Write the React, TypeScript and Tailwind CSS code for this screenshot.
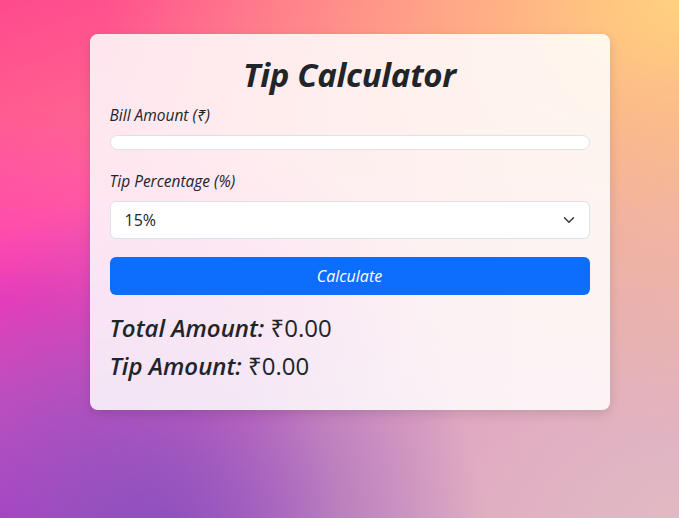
import React, { useState } from "react";

export default function App() {
  const [bill, setBill] = useState("");
  const [tip, setTip] = useState("15");
  const [total, setTotal] = useState(0);
  const [tipAmt, setTipAmt] = useState(0);

  const calc = () => {
    const b = parseFloat(bill) || 0;
    const t = (b * parseFloat(tip)) / 100;
    setTipAmt(t);
    setTotal(b + t);
  };

  return (
    <div
      className="w-full h-[518px] overflow-hidden flex justify-center pl-5 pt-[34px] text-[#212529] bg-[radial-gradient(ellipse_at_22%_105%,#8a4fbd_0%,rgba(138,79,189,0)_45%),radial-gradient(ellipse_at_0%_100%,#c83cc8_0%,rgba(200,60,200,0)_35%),radial-gradient(ellipse_at_0%_58%,#ff38b8_0%,rgba(255,56,184,0)_45%),radial-gradient(ellipse_at_100%_0%,#ffd27e_0%,rgba(255,210,126,0)_60%),radial-gradient(ellipse_at_100%_100%,#e2b9c3_0%,rgba(226,185,195,0)_55%),linear-gradient(160deg,#ff4a8c_0%,#ff6f95_30%,#e58cc0_60%,#d8a3c0_100%)]"
      style={{ fontFamily: '"Open Sans", "Noto Sans", sans-serif' }}
    >
      <div className="w-[520px] h-[376px] rounded-lg bg-white/85 shadow-[0_4px_12px_rgba(0,0,0,0.12)] px-5 pt-[21px] pb-5 flex flex-col">
        <h2 className="text-center text-[33px] leading-[1.2] font-bold italic mb-2 tracking-[-0.3px]">
          Tip Calculator
        </h2>
        <label className="text-[15.5px] leading-6 italic font-normal mb-2">
          Bill Amount (₹)
        </label>
        <input
          type="number"
          value={bill}
          onChange={(e) => setBill(e.target.value)}
          className="h-[15px] w-full rounded-full border border-[#dee2e6] bg-white outline-none mb-[19px] text-xs px-2"
        />
        <label className="text-[15.5px] leading-6 italic font-normal mb-2">
          Tip Percentage (%)
        </label>
        <div className="relative mb-[18px]">
          <select
            value={tip}
            onChange={(e) => setTip(e.target.value)}
            className="appearance-none w-full h-[38px] rounded-md border border-[#dee2e6] bg-white pl-[14px] text-[16px] outline-none"
          >
            <option value="10">10%</option>
            <option value="15">15%</option>
            <option value="20">20%</option>
          </select>
          <svg
            className="absolute right-[14px] top-[13px] pointer-events-none"
            width="14"
            height="12"
            viewBox="0 0 16 16"
            fill="none"
            stroke="#343a40"
            strokeWidth="2"
            strokeLinecap="round"
            strokeLinejoin="round"
          >
            <path d="M2 5l6 6 6-6" />
          </svg>
        </div>
        <button
          onClick={calc}
          className="w-full h-[38px] rounded-md bg-[#0d6efd] text-white text-[16px] italic font-normal mb-[19px]"
        >
          Calculate
        </button>
        <div className="text-[24px] leading-[1.2] mb-[10px]">
          <span className="font-semibold italic">Total Amount:</span> ₹{total.toFixed(2)}
        </div>
        <div className="text-[24px] leading-[1.2]">
          <span className="font-semibold italic">Tip Amount:</span> ₹{tipAmt.toFixed(2)}
        </div>
      </div>
    </div>
  );
}
